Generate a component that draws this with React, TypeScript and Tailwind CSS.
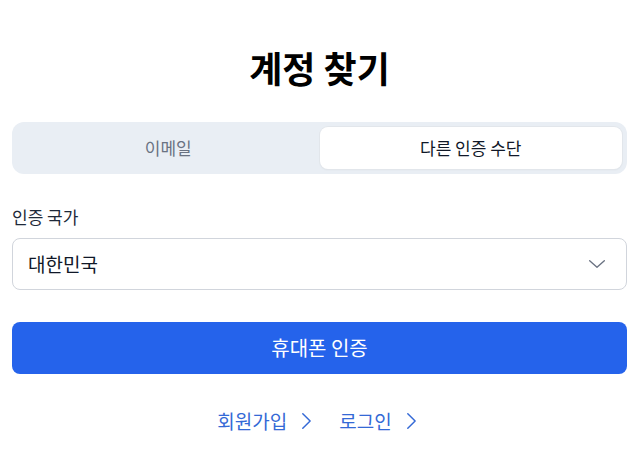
import React, { useState } from "react";

// 탭 목록
const tabs = ["이메일", "다른 인증 수단"];

const font = { fontFamily: '"Noto Sans CJK KR", "Noto Sans", sans-serif' };

function Chevron({ className }: { className?: string }) {
  return (
    <svg viewBox="0 0 24 24" className={className} fill="none" stroke="currentColor" strokeWidth={1.6} strokeLinecap="round" strokeLinejoin="round">
      <path d="M8.5 4l8 8-8 8" />
    </svg>
  );
}

export default function App() {
  const [tab, setTab] = useState<number>(1);

  return (
    <div className="w-full min-h-screen bg-white text-gray-900" style={font}>
      <div className="ml-3 w-[615px] flex flex-col">
        <h1 className="text-[36px] font-bold text-center mt-[38px] leading-[58px] text-black">
          계정 찾기
        </h1>

        {/* 탭 */}
        <div className="mt-[26px] h-[52px] rounded-xl bg-[#e9eef4] p-[5px] flex">
          {tabs.map((t, i) => (
            <button
              key={t}
              onClick={() => setTab(i)}
              className={
                i === tab
                  ? "flex-1 rounded-lg bg-white text-[17px] text-gray-900 shadow-[0_0_0_1px_#e2e6eb,0_1px_2px_rgba(0,0,0,0.06)]"
                  : "flex-1 rounded-lg text-[17px] text-gray-500"
              }
            >
              {t}
            </button>
          ))}
        </div>

        {/* 인증 국가 */}
        <label className="mt-[33px] text-[17px] text-gray-800 leading-5">인증 국가</label>
        <div className="mt-[11px] h-[52px] rounded-lg border border-gray-300 flex items-center justify-between pl-[15px] pr-[18px]">
          <span className="text-[19px] text-gray-900">대한민국</span>
          <svg viewBox="0 0 24 24" className="w-[22px] h-[22px] text-gray-500" fill="none" stroke="currentColor" strokeWidth={1.5} strokeLinecap="round" strokeLinejoin="round">
            <path d="M4 8.5l8 7 8-7" />
          </svg>
        </div>

        <button className="mt-[32px] h-[52px] rounded-lg bg-[#2563eb] text-white text-[20px]">
          휴대폰 인증
        </button>

        <div className="mt-[33px] flex justify-center gap-[22px] text-[19px] text-[#3469d6]">
          <a className="flex items-center gap-[8px]">
            회원가입
            <Chevron className="w-[22px] h-[22px]" />
          </a>
          <a className="flex items-center gap-[8px]">
            로그인
            <Chevron className="w-[22px] h-[22px]" />
          </a>
        </div>
      </div>
    </div>
  );
}
